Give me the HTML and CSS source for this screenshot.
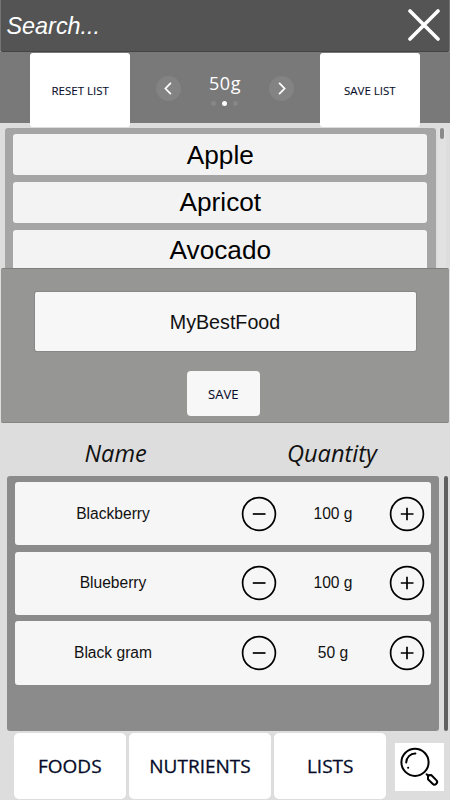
FILE: index.html
```html
<!DOCTYPE html>
<html lang="en">
<head>
<meta charset="utf-8">
<title>Food list</title>
<link rel="stylesheet" href="styles.css">
</head>
<body>
<div class="app">
  <header class="search">
    <span class="search-text">Search...</span>
    <svg class="close" viewBox="0 0 32 32"><path d="M2 2L30 30M30 2L2 30"/></svg>
  </header>
  <section class="toolbar">
    <button class="tool">RESET LIST</button>
    <div class="stepper">
      <span class="arrow"><svg viewBox="0 0 26 26"><path d="M15.5 7.2L9.8 13L15.5 18.8"/></svg></span>
      <div class="amount">
        <span class="amount-text">50g</span>
        <div class="dots"><i></i><i class="on"></i><i></i></div>
      </div>
      <span class="arrow"><svg viewBox="0 0 26 26"><path d="M10.5 7.2L16.2 13L10.5 18.8"/></svg></span>
    </div>
    <button class="tool">SAVE LIST</button>
  </section>
  <section class="catalog">
    <div class="catalog-list">
      <div class="food">Apple</div>
      <div class="food">Apricot</div>
      <div class="food">Avocado</div>
    </div>
    <div class="track"><div class="thumb"></div></div>
  </section>
  <section class="dialog">
    <div class="field"><span class="field-text">MyBestFood</span></div>
    <button class="save">SAVE</button>
  </section>
  <div class="headings"><span class="h-name">Name</span><span class="h-qty">Quantity</span></div>
  <section class="chosen">
    <div class="chosen-list">
      <div class="item">
        <span class="name">Blackberry</span>
        <svg class="round" viewBox="0 0 36 36"><circle cx="18" cy="18" r="16.4"/><path d="M11.8 18H24.5"/></svg>
        <span class="qty">100 g</span>
        <svg class="round" viewBox="0 0 36 36"><circle cx="18" cy="18" r="16.4"/><path d="M11.8 18H24.5M18 11.7V24.3"/></svg>
      </div>
      <div class="item">
        <span class="name">Blueberry</span>
        <svg class="round" viewBox="0 0 36 36"><circle cx="18" cy="18" r="16.4"/><path d="M11.8 18H24.5"/></svg>
        <span class="qty">100 g</span>
        <svg class="round" viewBox="0 0 36 36"><circle cx="18" cy="18" r="16.4"/><path d="M11.8 18H24.5M18 11.7V24.3"/></svg>
      </div>
      <div class="item">
        <span class="name">Black gram</span>
        <svg class="round" viewBox="0 0 36 36"><circle cx="18" cy="18" r="16.4"/><path d="M11.8 18H24.5"/></svg>
        <span class="qty">50 g</span>
        <svg class="round" viewBox="0 0 36 36"><circle cx="18" cy="18" r="16.4"/><path d="M11.8 18H24.5M18 11.7V24.3"/></svg>
      </div>
    </div>
    <div class="chosen-bar"></div>
  </section>
  <nav class="tabs">
    <button class="tab">FOODS</button>
    <button class="tab wide">NUTRIENTS</button>
    <button class="tab">LISTS</button>
    <svg class="find" viewBox="0 0 49 48">
      <circle cx="20" cy="19.3" r="13.6"/>
      <path d="M11.2 19.5A9 9 0 0 1 20.4 10.6"/>
      <path d="M13.1 24.8h.1M31.6 31.2L33.4 33"/>
      <path d="M33 32.2L36.2 32L41.3 37.1A2.6 2.6 0 0 1 37.6 40.8L33 36.2Z"/>
    </svg>
  </nav>
</div>
</body>
</html>
```

FILE: styles.css
```css
* { box-sizing: border-box; }
body { margin: 0; background: #ddd; font-family: "Liberation Sans", Arial, sans-serif; }
button { border: 0; padding: 0; font-family: "Open Sans", "Noto Sans", sans-serif; color: #050b29; background: #fff; white-space: nowrap; -webkit-text-stroke: .1px #050b29; }
svg { display: block; fill: none; flex: none; }
.app { width: 450px; height: 800px; display: flex; flex-direction: column; overflow: hidden; background: #ddd; }
.search { height: 52px; flex: none; margin: 0 1px; padding: 0 9px 1px 5.5px; display: flex; align-items: center; justify-content: space-between; background: #545454; border-bottom: 1px solid #444; border-radius: 0 0 2px 2px; box-shadow: 0 0 0 1px #747474; }
.search-text { color: #fff; font-size: 23.4px; font-style: italic; line-height: 28px; padding-top: 2px; }
.close { width: 32px; height: 32px; stroke: #fff; stroke-width: 3.6; stroke-linecap: round; }
.toolbar { height: 71px; flex: none; padding: 1px 30px 0; display: flex; justify-content: space-between; background: #797979; }
.tool { width: 100.3px; height: 74px; flex: none; border-radius: 3px; font-size: 11.5px; position: relative; }
.stepper { display: flex; width: 138px; height: 71px; align-items: center; justify-content: space-between; }
.arrow { width: 25px; height: 25px; border-radius: 50%; background: #838383; }
.arrow svg { width: 25px; height: 25px; stroke: #fff; stroke-width: 1.8; }
.amount { display: flex; flex-direction: column; align-items: center; padding-top: 1px; }
.amount-text { color: #fff; font: 18px/24px "Open Sans", "Noto Sans", sans-serif; letter-spacing: .5px; }
.dots { display: flex; gap: 6px; align-items: center; height: 8px; margin-top: 4px; }
.dots i { width: 5px; height: 5px; border-radius: 50%; background: #878787; }
.dots .on { background: #fff; }
.catalog { height: 145px; flex: none; display: flex; padding: 4.5px 2px 0 5px; overflow: hidden; }
.catalog-list { width: 430.7px; height: 160px; border-radius: 3px; background: #a5a5a5; padding: 6.3px 8.3px; display: flex; flex-direction: column; gap: 6.3px; }
.food { height: 41.6px; flex: none; display: flex; align-items: center; justify-content: center; background: #f3f3f3; border-radius: 3px; color: #000; font-size: 26.2px; padding-top: 1px; }
.track { width: 8px; margin-left: 2px; padding: 0 2px; background: #e1e1e1; }
.thumb { width: 4px; height: 11px; border-radius: 2px; background: #8a8a8a; }
.dialog { height: 155px; flex: none; margin: 0 1px; padding: 23.4px 34px 0; display: flex; flex-direction: column; align-items: center; background: #969694; border-radius: 2px; border-top: 1px solid #7e7e7e; border-bottom: 1px solid #858585; }
.field { width: 381px; height: 59px; flex: none; display: flex; align-items: center; justify-content: center; background: #f7f7f7; border-radius: 2px; color: #111; font-size: 19.7px; padding-top: 2px; box-shadow: 0 0 0 1px #888; }
.save { width: 72.5px; height: 45px; margin: 20px 3.5px 0 0; background: #f7f7f7; border-radius: 4px; font-size: 13px; }
.headings { height: 53px; flex: none; display: flex; padding: 12px 0 0 84.5px; font: italic 23.6px/36px "Open Sans", "Noto Sans", sans-serif; color: #111; }
.h-name { width: 202.5px; }
.chosen { height: 255px; flex: none; display: flex; padding-left: 7px; }
.chosen-list { width: 432px; border-radius: 3px; background: #8b8b8b; padding: 6px 8px; display: flex; flex-direction: column; gap: 6.4px; }
.item { height: 63.3px; flex: none; display: grid; grid-template-columns: 226px 36px 112px 36px; align-items: center; background: #f6f6f6; border-radius: 3px; color: #111; font-size: 15.6px; }
.name { width: 196px; text-align: center; }
.qty { text-align: center; }
.round { width: 36px; height: 36px; stroke: #000; stroke-width: 1.7; }
.chosen-bar { width: 4px; margin-left: 5px; border-radius: 2px; background: #606060; }
.tabs { height: 69px; flex: none; display: flex; padding: 2px 0 0 14px; gap: 3px; }
.tab { width: 111.6px; height: 66px; border-radius: 5px; font-size: 19px; -webkit-text-stroke: .3px #050b29; }
.wide { width: 142.8px; }
.find { width: 49px; height: 48px; margin: 10px 0 0 6px; background: #fff; stroke: #000; stroke-width: 2; stroke-linecap: round; stroke-linejoin: round; }
```
